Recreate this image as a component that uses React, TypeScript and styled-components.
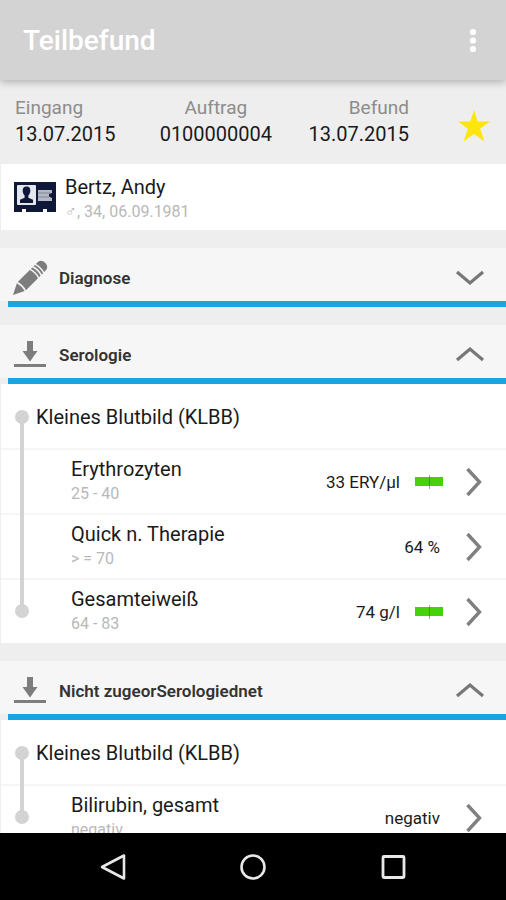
import React, { useState } from "react";
import styled, { createGlobalStyle } from "styled-components";

const GlobalStyle = createGlobalStyle`
  *, *::before, *::after { box-sizing: border-box; }
  body {
    margin: 0;
    background: #eeeeee;
    color: #1a1a1a;
    font-family: Roboto, "Liberation Sans", sans-serif;
  }
  button {
    margin: 0;
    padding: 0;
    border: 0;
    background: none;
    color: inherit;
    font: inherit;
    cursor: pointer;
  }
  h1, h2, h3, p, dl, dd, ul { margin: 0; padding: 0; }
  ul { list-style: none; }
  svg { display: block; }
`;

const Screen = styled.div`
  display: flex;
  flex-direction: column;
  height: 100vh;
`;

const AppBar = styled.header`
  display: flex;
  flex: none;
  align-items: center;
  justify-content: space-between;
  height: 80px;
  padding: 2px 17px 0 23px;
  background: #d3d3d3;
  box-shadow: 0 2px 8px rgba(0, 0, 0, 0.28);
  z-index: 1;
`;

const AppTitle = styled.h1`
  color: #ffffff;
  font-size: 28px;
  font-weight: 500;
  line-height: 32px;
`;

const IconButton = styled.button`
  display: grid;
  flex: none;
  width: 32px;
  height: 44px;
  place-items: center;
`;

const Content = styled.main`
  flex: 1;
  min-height: 0;
  overflow: hidden;
`;

const Summary = styled.div`
  display: flex;
  align-items: flex-end;
  justify-content: space-between;
  padding: 16px 17px 16px 15px;
`;

const Dates = styled.dl`
  display: grid;
  flex: 1;
  grid-template-columns: 35fr 34fr 33fr;
  margin-right: 48px;
`;

const DateField = styled.div<{ $align: "left" | "center" | "right" }>`
  text-align: ${(p) => p.$align};
  white-space: nowrap;
`;

const DateLabel = styled.dt`
  color: #8c8c8c;
  font-size: 19px;
  line-height: 24px;
`;

const DateValue = styled.dd`
  font-size: 20px;
  line-height: 28px;
`;

const Patient = styled.section`
  display: flex;
  align-items: center;
  gap: 9px;
  height: 66px;
  margin-left: 1px;
  padding-left: 13px;
  background: #ffffff;
`;

const Lines = styled.div`
  flex: 1;
  min-width: 0;
  text-align: left;
`;

const PatientLines = styled(Lines)`
  padding-top: 6px;
`;

const Primary = styled.h3`
  font-size: 20px;
  font-weight: 400;
  line-height: 24px;
`;

const Secondary = styled.p`
  color: #b8b8b8;
  font-size: 16px;
  line-height: 26px;
`;

const Section = styled.section`
  margin-top: 18px;
`;

const SectionHeader = styled.button`
  display: flex;
  align-items: center;
  width: 100%;
  height: 53px;
  padding: 6px 20px 0 12px;
  background: #f6f6f6;
  color: #333333;
  text-align: left;
`;

const SectionIcon = styled.span`
  flex: none;
  width: 47px;
`;

const SectionTitle = styled.h2`
  flex: 1;
  font-size: 17px;
  font-weight: 600;
  line-height: 24px;
`;

const Accent = styled.div`
  height: 6px;
  margin-left: 8px;
  background: #1ba5dc;
`;

const Panel = styled.div`
  position: relative;
  margin-left: 1px;
  background: #ffffff;
`;

/* The rail lies over the row dividers and joins the group to its last value. */
const Rail = styled.div`
  position: absolute;
  top: 33px;
  bottom: 32px;
  left: 19px;
  width: 4px;
  background: #d3d3d3;

  &::before,
  &::after {
    content: "";
    position: absolute;
    left: -5px;
    width: 14px;
    height: 14px;
    border-radius: 50%;
    background: #d3d3d3;
  }
  &::before { top: -7px; }
  &::after { bottom: -7px; }
`;

const GroupTitle = styled.h3`
  height: 64px;
  padding-left: 35px;
  font-size: 20px;
  font-weight: 400;
  line-height: 66px;
`;

const Row = styled.button`
  display: flex;
  align-items: center;
  width: 100%;
  height: 65px;
  padding: 0 24px 0 70px;
  border-top: 2px solid #f5f5f5;
`;

const Value = styled.span`
  font-size: 17px;
  line-height: 24px;
  white-space: nowrap;
`;

const RangeBar = styled.span`
  display: grid;
  width: 28px;
  height: 14px;
  margin-left: 15px;
  place-items: center;
  background: linear-gradient(#45d20b, #45d20b) center / 100% 9px no-repeat;

  &::after {
    content: "";
    width: 1px;
    height: 14px;
    background: rgba(30, 90, 20, 0.45);
  }
`;

const RowArrow = styled.span<{ $wide: boolean }>`
  margin-left: ${(p) => (p.$wide ? 26 : 23)}px;
`;

const NavBar = styled.nav`
  display: flex;
  flex: none;
  align-items: center;
  justify-content: center;
  gap: 108px;
  height: 67px;
  background: #000000;
`;

const StarIcon = () => (
  <svg width="34" height="34" viewBox="0 0 34 34" aria-hidden="true">
    <path fill="#ffe60a" d="M17 1 20.7 12.5H33L23.1 19.7 27.6 32.5 17 25 6.4 32.5 10.9 19.7 1 12.5H13.3Z" />
  </svg>
);

const MoreIcon = () => (
  <svg width="8" height="26" viewBox="0 0 8 26" fill="#fff" aria-hidden="true">
    <circle cx="4" cy="4" r="3.1" />
    <circle cx="4" cy="12.5" r="3.1" />
    <circle cx="4" cy="21" r="3.1" />
  </svg>
);

const CardIcon = () => (
  <svg width="42" height="30" viewBox="0 0 42 30" aria-hidden="true">
    <path fill="#10183a" d="M0 0H42V30H33V27H29V30H12V27H8V30H0Z" />
    <rect x="3" y="3" width="19" height="20" rx="1" fill="#e4e7ec" />
    <path fill="#10183a" d="M12.500 4.500c3 0 4 2 3.800 4.700-.2 2-1 3.300-1.900 4.200v2.400l4.600 2V21H6v-3.200l4.600-2v-2.400C9.600 12.500 8.900 11.200 8.700 9.200 8.500 6.500 9.600 4.500 12.500 4.500Z" />
    <path fill="#b4b8c4" d="M24 8H38V11L35 12V14.500L38 16V19H24Z" />
    <path fill="#10183a" fillOpacity=".3" d="M24 10.500H36V11.500H24ZM24 14.500H35V15.500H24Z" />
  </svg>
);

const PencilIcon = () => (
  <svg width="36" height="36" viewBox="0 0 36 36" aria-hidden="true">
    <g fill="#7d7d7d" transform="translate(1 35) rotate(-45)">
      <path d="M0 0 11-5.500Q12.500 0 11 5.500Z" />
      <path d="M12.500-5.800H29.500Q31.500 0 29.500 5.800H12.500Q14.500 0 12.500-5.800Z" />
      <path d="M31-5.800H33.200Q35.200 0 33.200 5.800H31Q33 0 31-5.800Z" />
      <path d="M34.700-5.800H36.700Q38.700 0 36.700 5.800H34.700Q36.700 0 34.700-5.800Z" />
      <path d="M38.200-5.800H41Q45.500-5 45.500 0T41 5.800H38.200Q40.200 0 38.200-5.800Z" />
    </g>
  </svg>
);

const DownloadIcon = () => (
  <svg width="36" height="28" viewBox="0 0 36 28" fill="#7d7d7d" aria-hidden="true">
    <path d="M15 0H21V10H25.500L18 20.500 10.500 10H15Z" />
    <rect x="2" y="23" width="32" height="3" />
  </svg>
);

const FoldIcon = ({ open }: { open: boolean }) => (
  <svg width="32" height="18" viewBox="0 0 32 18" fill="none" stroke="#777" strokeWidth="3.200" aria-hidden="true">
    <path d={open ? "M3 14 16 3 29 14" : "M3 3 16 14 29 3"} />
  </svg>
);

const ArrowIcon = () => (
  <svg width="16" height="30" viewBox="0 0 16 30" fill="none" stroke="#808080" strokeWidth="3.400" aria-hidden="true">
    <path d="M1.500 2 13.500 15 1.500 28" />
  </svg>
);

type Result = { name: string; range: string; value: string; bar?: boolean };

const serology: Result[] = [
  { name: "Erythrozyten", range: "25 - 40", value: "33 ERY/µl", bar: true },
  { name: "Quick n. Therapie", range: "> = 70", value: "64 %" },
  { name: "Gesamteiweiß", range: "64 - 83", value: "74 g/l", bar: true },
];

const unassigned: Result[] = [
  { name: "Bilirubin, gesamt", range: "negativ", value: "negativ" },
];

const Results = ({ items }: { items: Result[] }) => (
  <Panel>
    <GroupTitle>Kleines Blutbild (KLBB)</GroupTitle>
    <ul>
      {items.map((item) => (
        <li key={item.name}>
          <Row type="button">
            <Lines>
              <Primary as="div">{item.name}</Primary>
              <Secondary as="div">{item.range}</Secondary>
            </Lines>
            <Value>{item.value}</Value>
            {item.bar && <RangeBar />}
            <RowArrow $wide={!item.bar}>
              <ArrowIcon />
            </RowArrow>
          </Row>
        </li>
      ))}
    </ul>
    <Rail />
  </Panel>
);

type FoldProps = {
  title: string;
  icon: React.ReactNode;
  initiallyOpen?: boolean;
  children?: React.ReactNode;
};

const Fold = ({ title, icon, initiallyOpen = false, children }: FoldProps) => {
  const [open, setOpen] = useState(initiallyOpen);
  return (
    <Section>
      <SectionHeader type="button" aria-expanded={open} onClick={() => setOpen(!open)}>
        <SectionIcon>{icon}</SectionIcon>
        <SectionTitle as="span">{title}</SectionTitle>
        <FoldIcon open={open} />
      </SectionHeader>
      <Accent />
      {open && children}
    </Section>
  );
};

export default function App() {
  return (
    <>
      <GlobalStyle />
      <Screen>
        <AppBar>
          <AppTitle>Teilbefund</AppTitle>
          <IconButton type="button" aria-label="Mehr">
            <MoreIcon />
          </IconButton>
        </AppBar>
        <Content>
          <Summary>
            <Dates>
              <DateField $align="left">
                <DateLabel>Eingang</DateLabel>
                <DateValue>13.07.2015</DateValue>
              </DateField>
              <DateField $align="center">
                <DateLabel>Auftrag</DateLabel>
                <DateValue>0100000004</DateValue>
              </DateField>
              <DateField $align="right">
                <DateLabel>Befund</DateLabel>
                <DateValue>13.07.2015</DateValue>
              </DateField>
            </Dates>
            <IconButton type="button" aria-label="Favorit">
              <StarIcon />
            </IconButton>
          </Summary>
          <Patient>
            <CardIcon />
            <PatientLines>
              <Primary>Bertz, Andy</Primary>
              <Secondary>♂, 34, 06.09.1981</Secondary>
            </PatientLines>
          </Patient>
          <Fold title="Diagnose" icon={<PencilIcon />} />
          <Fold title="Serologie" icon={<DownloadIcon />} initiallyOpen>
            <Results items={serology} />
          </Fold>
          <Fold title="Nicht zugeorSerologiednet" icon={<DownloadIcon />} initiallyOpen>
            <Results items={unassigned} />
          </Fold>
        </Content>
        <NavBar>
          <IconButton type="button" aria-label="Zurück">
            <svg width="28" height="28" viewBox="0 0 28 28" fill="none" stroke="#e8e8e8" strokeWidth="2.600" strokeLinejoin="round">
              <path d="M3 14 25 2.500V25.500Z" />
            </svg>
          </IconButton>
          <IconButton type="button" aria-label="Startseite">
            <svg width="28" height="28" viewBox="0 0 28 28" fill="none" stroke="#e8e8e8" strokeWidth="2.600">
              <circle cx="14" cy="14" r="11.500" />
            </svg>
          </IconButton>
          <IconButton type="button" aria-label="Übersicht">
            <svg width="28" height="28" viewBox="0 0 28 28" fill="none" stroke="#e8e8e8" strokeWidth="2.800">
              <rect x="4" y="3.500" width="21" height="21" rx="1" />
            </svg>
          </IconButton>
        </NavBar>
      </Screen>
    </>
  );
}
